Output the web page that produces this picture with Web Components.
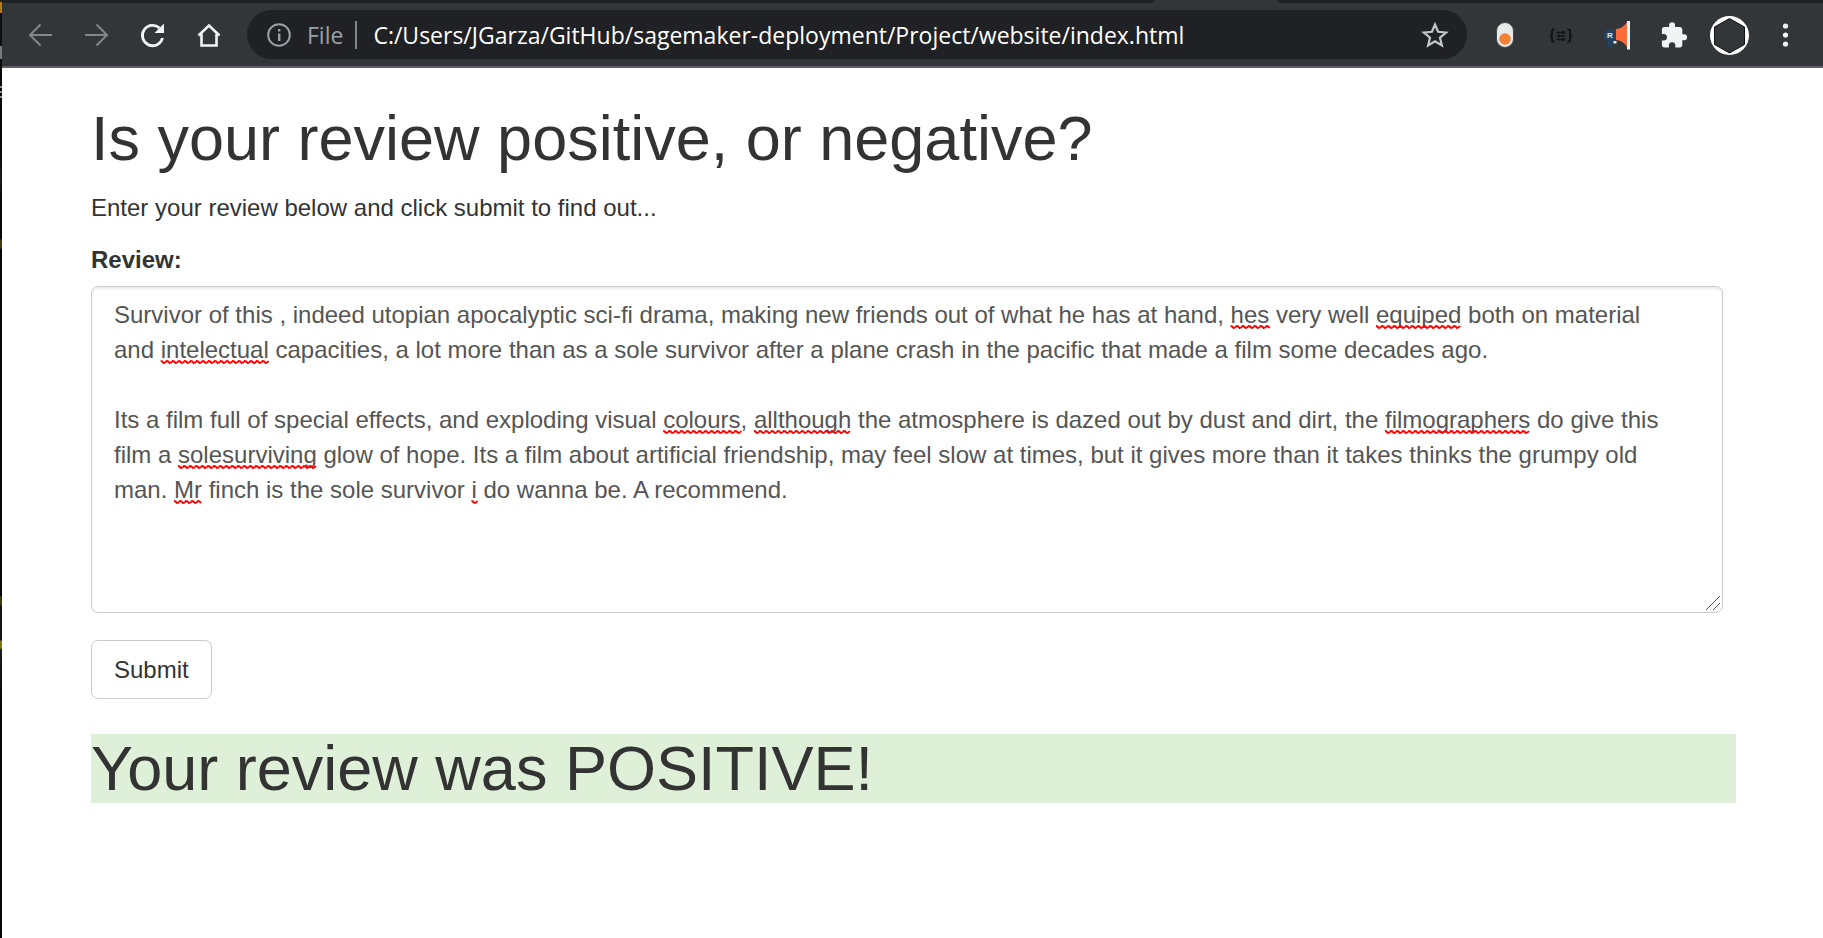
<!DOCTYPE html>
<html lang="en">
<head>
<meta charset="utf-8">
<title>Sentiment Analysis Web App</title>
<style>
body { margin: 0; background: #fff; }
</style>
</head>
<body>
<browser-window>
  <browser-toolbar slot="toolbar">
    <address-bar scheme="File" url="C:/Users/JGarza/GitHub/sagemaker-deployment/Project/website/index.html"></address-bar>
  </browser-toolbar>
  <page-heading>Is your review positive, or negative?</page-heading>
  <page-text>Enter your review below and click submit to find out...</page-text>
  <review-form></review-form>
  <page-heading tone="positive">Your review was POSITIVE!</page-heading>
</browser-window>

<script>
const define = (name, html, ready) => {
  const template = document.createElement('template');
  template.innerHTML = html;
  customElements.define(name, class extends HTMLElement {
    connectedCallback() {
      if (this.shadowRoot) return;
      this.attachShadow({ mode: 'open' }).append(template.content.cloneNode(true));
      if (ready) ready(this, this.shadowRoot);
    }
  });
};

define('browser-window', `
<style>
  :host { display: grid; grid-template-columns: 2px 1fr; min-height: 100vh; }
  /* sliver of the window that lies behind this one */
  .edge {
    background: linear-gradient(#202124 0 2px, #b87a14 2px 13px, #0d0d0f 13px 46px, #77797c 46px 59px, #08080a 59px 86px,
      #8a8a8a 86px 88px, #08080a 88px 91px, #8a8a8a 91px 93px, #08080a 93px 96px, #8a8a8a 96px 98px, #08080a 98px 150px,
      #1b1b1d 180px, #08080a 200px 239px, #3d3b0c 240px 248px, #08080a 249px 596px, #3d3b0c 597px 605px, #141416 606px 640px,
      #77751c 641px 648px, #1b1b1d 650px, #08080a 700px);
  }
  main { padding: 36px 87px 0 89px; }
</style>
<div class="edge"></div>
<div>
  <slot name="toolbar"></slot>
  <main><slot></slot></main>
</div>`);

define('browser-toolbar', `
<style>
  :host { display: block; background: #323639; border-bottom: 2px solid #5f6063; }
  .tabs { height: 3px; background: #202124; display: flex; justify-content: flex-end; }
  .tab { width: 126px; margin-right: 544px; background: #323639; border-radius: 3px 3px 0 0; }
  .bar { display: flex; align-items: center; padding: 7px 18px; gap: 16px; }
  ::slotted(*) { flex: 1; margin: 0 2px 0 3px; }
  button { width: 40px; height: 40px; flex: none; padding: 0; border: 0; background: none; }
  svg { display: block; overflow: visible; }
</style>
<div class="tabs"><div class="tab"></div></div>
<div class="bar">
  <button aria-label="Back" disabled><svg width="40" height="40" fill="none" stroke="#84878a" stroke-width="2"><path d="M32 20H10M20.500 9.500L10 20l10.500 10.500"/></svg></button>
  <button aria-label="Forward" disabled><svg width="40" height="40" fill="none" stroke="#84878a" stroke-width="2"><path d="M9 20h22M20.500 9.500L31 20L20.500 30.500"/></svg></button>
  <button aria-label="Reload"><svg width="40" height="40"><path d="M27.500 13A10.200 10.200 0 1 0 30.500 23" fill="none" stroke="#f1f3f4" stroke-width="2.800"/><path d="M32 8.500v9.500h-9.500z" fill="#f1f3f4"/></svg></button>
  <button aria-label="Home"><svg width="40" height="40" fill="none" stroke="#f1f3f4" stroke-width="2.600"><path d="M10.500 20.500L21 10.500l10.500 10M13.500 19v11.500h15V19"/></svg></button>
  <slot></slot>
  <button aria-label="Toggle extension"><svg width="40" height="40"><rect x="11.500" y="7.500" width="17" height="25" rx="8.500" fill="#e8eaea" stroke="#45484a"/><circle cx="20" cy="24" r="5.800" fill="#f57f32"/></svg></button>
  <button aria-label="JSON extension"><svg width="40" height="40" fill="none" stroke="#111314" stroke-width="2"><path d="M13.500 14.500h-1q-1.500 0-1.500 1.500v2.500q0 2-2 2q2 0 2 2V25q0 1.500 1.500 1.500h1M26.500 14.500h1q1.500 0 1.500 1.500v2.500q0 2 2 2q-2 0-2 2V25q0 1.500-1.500 1.500h-1"/><path d="M15.500 17.500h9M15.500 21h9M15.500 24.500h9" stroke-width="1.500"/><path d="M22 16v3M18 19.500v3M22 23v3"/></svg></button>
  <button aria-label="Megaphone extension"><svg width="40" height="40"><path d="M12 14.500h6.500v11.500h-2.500l-1 6.500h-4l-.5-6.500a6 6 0 0 1 1.500-11.500zM31 18h3v4h-3z" fill="#234361"/><path d="M19 14Q26 13.500 30 7v25Q27 26 19 25z" fill="#ff6b3a"/><path d="M30 6h3v28.500h-3zM16.500 26h3v2.500h-3z" fill="#e9f5f8"/><text x="10" y="22.500" font-family="Liberation Sans, sans-serif" font-size="8" font-weight="bold" fill="#dfe6ee">R</text></svg></button>
  <button aria-label="Extensions"><svg width="40" height="40" viewBox="0 0 40 40"><path transform="translate(6.500 6) scale(1.200)" fill="#f1f3f4" d="M20.500 11H19V7c0-1.100-.9-2-2-2h-4V3.500a2.500 2.500 0 0 0-5 0V5H4c-1.100 0-2 .9-2 2v3.800h1.500a2.700 2.700 0 0 1 0 5.400H2V20c0 1.100.9 2 2 2h3.800v-1.500a2.700 2.700 0 0 1 5.400 0V22H17c1.100 0 2-.9 2-2v-4h1.500a2.500 2.500 0 0 0 0-5z"/></svg></button>
  <button aria-label="Profile"><svg width="40" height="40"><circle cx="20.500" cy="20.500" r="19.500" fill="#fff"/><path d="M20.500 3.500l15 8.500v17.500l-15 8.500l-15-8.500V12z" fill="#323639" stroke="#111" stroke-width="1"/></svg></button>
  <button aria-label="Menu"><svg width="40" height="40" fill="#f1f3f4"><circle cx="20.500" cy="11" r="2.600"/><circle cx="20.500" cy="20" r="2.600"/><circle cx="20.500" cy="29" r="2.600"/></svg></button>
</div>`);

define('address-bar', `
<style>
  :host { display: flex; align-items: center; height: 49px; border-radius: 25px; background: #202124;
    font: 23px/32px "Open Sans", sans-serif; color: #fff; }
  button { padding: 0; border: 0; background: none; }
  .info { margin: 0 16px 0 20px; }
  .star { margin: 0 12px 0 16px; }
  svg { display: block; }
  .scheme { color: #9aa0a6; padding-right: 12px; margin-right: 16px; border-right: 2px solid #80868b; line-height: 28px; }
  input { flex: 1; min-width: 0; padding: 0; border: 0; outline: 0; background: none; color: inherit; font: inherit; }
</style>
<button class="info" aria-label="View site information"><svg width="24" height="24"><circle cx="12" cy="12" r="10.800" fill="none" stroke="#9aa0a6" stroke-width="2"/><path d="M11 10.500h2.400v7.500H11zM11 6h2.400v2.500H11z" fill="#9aa0a6"/></svg></button>
<span class="scheme"></span>
<input type="text" aria-label="Address" spellcheck="false">
<button class="star" aria-label="Bookmark this page"><svg width="40" height="40"><path d="M20 9.500l3.100 7.300l8 .7l-6.100 5.200l1.900 7.800l-6.900-4.100l-6.900 4.100l1.900-7.800l-6.100-5.200l8-.7z" fill="none" stroke="#c4c7c9" stroke-width="2.200"/></svg></button>`,
(host, root) => {
  root.querySelector('.scheme').textContent = host.getAttribute('scheme');
  root.querySelector('input').value = host.getAttribute('url');
});

define('page-heading', `
<style>
  :host { display: block; }
  h1 { margin: 0; font: 400 63px/69px "Liberation Sans", Arial, sans-serif; color: #333; }
  :host([tone="positive"]) h1 { background: #dff0d8; }
</style>
<h1><slot></slot></h1>`);

define('page-text', `
<style>
  :host { display: block; }
  p { margin: 17px 0; font: 24px/35px "Liberation Sans", Arial, sans-serif; color: #333; }
</style>
<p><slot></slot></p>`);

define('review-form', `
<style>
  :host { display: block; font: 24px/35px "Liberation Sans", Arial, sans-serif; color: #333; }
  form { margin: 0 0 35px; }
  label { display: block; font-weight: 700; margin-bottom: 9px; }
  .field { position: relative; margin: 0 13px 27px 0; }
  textarea, .mirror { box-sizing: border-box; width: 100%; padding: 10px 44px 10px 22px; border: 1px solid #ccc; font: inherit; white-space: pre-wrap; overflow-wrap: break-word; }
  textarea { display: block; height: 327px; margin: 0; border-radius: 7px; outline: 0; color: #555; background: #fff;
    box-shadow: inset 0 2px 2px rgba(0,0,0,.075); overflow: auto; resize: vertical; }
  textarea::-webkit-resizer { background: transparent; }
  .mirror { position: absolute; inset: 0 0 auto 0; visibility: hidden; }
  svg { position: absolute; pointer-events: none; fill: none; }
  .marks { inset: 0; width: 100%; height: 100%; stroke: #f00; stroke-width: 2; }
  .grip { right: 2px; bottom: 2px; stroke: #555; }
  button { display: block; padding: 11px 22px; border: 1px solid #ccc; border-radius: 7px; background: #fff; color: inherit; font: inherit; }
</style>
<form>
  <label for="review">Review:</label>
  <div class="field">
    <textarea id="review" name="review" spellcheck="false">Survivor of this , indeed utopian apocalyptic sci-fi drama, making new friends out of what he has at hand, hes very well equiped both on material and intelectual capacities, a lot more than as a sole survivor after a plane crash in the pacific that made a film some decades ago.

Its a film full of special effects, and exploding visual colours, allthough the atmosphere is dazed out by dust and dirt, the filmographers do give this film a solesurviving glow of hope. Its a film about artificial friendship, may feel slow at times, but it gives more than it takes thinks the grumpy old man. Mr finch is the sole survivor i do wanna be. A recommend.</textarea>
    <svg class="marks" aria-hidden="true"><path/></svg>
    <svg class="grip" width="16" height="16" aria-hidden="true"><path d="M1 15L15 1M8 15l7-7"/></svg>
  </div>
  <button type="submit">Submit</button>
</form>`,
(host, root) => {
  const field = root.querySelector('.field');
  const area = root.querySelector('textarea');
  const unknown = /\b(hes|equiped|intelectual|colours|allthough|filmographers|solesurviving|Mr|i)\b(?!-)/g;

  // Lay the text out once in a hidden twin, read the word boxes, then drop the twin.
  const mark = () => {
    const twin = document.createElement('div');
    twin.className = 'mirror';
    twin.textContent = area.value;
    field.append(twin);
    const origin = field.getBoundingClientRect();
    let d = '';
    for (const hit of area.value.matchAll(unknown)) {
      const range = document.createRange();
      range.setStart(twin.firstChild, hit.index);
      range.setEnd(twin.firstChild, hit.index + hit[0].length);
      const box = range.getBoundingClientRect();
      const y = Math.round(box.bottom - origin.top) - 1;
      const end = box.right - origin.left;
      let x = box.left - origin.left;
      d += 'M' + x + ' ' + (y - 1);
      for (let up = false; x + 2 <= end; up = !up) {
        d += 'q1.500 ' + (up ? '0 3 -2' : '0 3 2');
        x += 3;
      }
    }
    twin.remove();
    root.querySelector('.marks path').setAttribute('d', d);
  };
  mark();
  area.addEventListener('input', mark);
  window.addEventListener('resize', mark);
  root.querySelector('form').addEventListener('submit', event => event.preventDefault());
});
</script>
</body>
</html>
